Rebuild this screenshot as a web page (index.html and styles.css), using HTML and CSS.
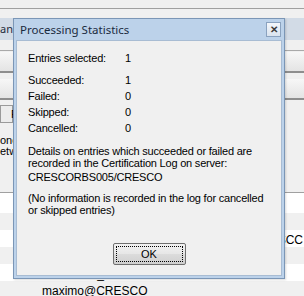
FILE: index.html
```html
<!DOCTYPE html>
<html lang="en">
<head>
    <meta charset="UTF-8">
    <meta name="viewport" content="width=device-width, initial-scale=1.0">
    <title>Processing Statistics</title>
    <link rel="stylesheet" href="styles.css">
</head>
<body>
    <div class="app">
        <div class="menubar"></div>
        <div class="tabstrip"></div>
        <div class="caption">an</div>
        <div class="toolbar"></div>

        <div class="panel">
            <div class="side left">
                <div class="btn"></div>
                <div class="btn second"></div>
                <div class="btn small"><span>Find</span></div>
                <div class="label first">once</div>
                <div class="label">etwork</div>
            </div>
            <div class="side right">
                <div class="btn"></div>
                <div class="btn second"></div>
            </div>
        </div>

        <div class="list">
            <div class="row"></div>
            <div class="row alt"></div>
            <div class="row"><span class="cell-right">SCC</span></div>
            <div class="row alt"></div>
            <div class="row"><span class="cell">maxadmin_CRESCO</span></div>
            <div class="row alt"><span class="cell">maximo@CRESCO</span></div>
        </div>
    </div>

    <div class="dialog">
        <div class="titlebar">
            <span class="title">Processing Statistics</span>
            <span class="close">&#x2715;</span>
        </div>
        <div class="body">
            <div class="stat first">
                <span class="key">Entries selected:</span><span>1</span>
            </div>
            <div class="stats">
                <div class="stat"><span class="key">Succeeded:</span><span>1</span></div>
                <div class="stat"><span class="key">Failed:</span><span>0</span></div>
                <div class="stat"><span class="key">Skipped:</span><span>0</span></div>
                <div class="stat"><span class="key">Cancelled:</span><span>0</span></div>
            </div>
            <p class="note">Details on entries which succeeded or failed are recorded in the Certification Log on server:</p>
            <p class="server">CRESCORBS005/CRESCO</p>
            <p class="note later">(No information is recorded in the log for cancelled or skipped entries)</p>
            <div class="actions">
                <button class="ok"><span>OK</span></button>
            </div>
        </div>
    </div>
</body>
</html>
```

FILE: styles.css
```css
body {
    margin: 0;
    width: 304px;
    height: 296px;
    overflow: hidden;
    background: #f0f0f0;
    font-family: 'Liberation Sans', Arial, sans-serif;
    font-size: 11px;
    color: #000;
}

.app {
    height: 296px;
}

.menubar {
    height: 8px;
    border-bottom: 1px solid #a0a0a0;
}

.tabstrip {
    height: 9px;
}

.caption {
    height: 22px;
    line-height: 22px;
    background: #d2dbe6;
    font-family: 'Noto Sans', sans-serif;
    font-size: 11px;
    color: #1e2b3c;
}

.toolbar {
    height: 10px;
    border-bottom: 1px solid #a9a9a9;
}

.panel {
    height: 141px;
    display: flex;
    justify-content: space-between;
    background: #f0f0f0;
}

.side {
    display: flex;
    flex-direction: column;
    padding-top: 1px;
    overflow: hidden;
    white-space: nowrap;
}

.side.left {
    width: 13px;
}

.side.right {
    width: 19px;
}

.btn {
    height: 19px;
    flex: none;
    background: linear-gradient(#f7f7f7, #e4e4e4);
    border-bottom: 2px solid #8e8e8e;
}

.btn.second {
    margin-top: 6px;
}

.btn.small {
    height: 16px;
    margin-top: 5px;
    line-height: 16px;
    padding-left: 10px;
    background: #ececec;
    border: 1px solid #9a9a9a;
}

.label {
    line-height: 11px;
}

.label.first {
    margin-top: 12px;
}

.list {
    border-top: 1px solid #a0a0a0;
    background: #fff;
    padding-top: 3px;
}

.row {
    height: 17px;
    box-sizing: border-box;
    padding-top: 4px;
    line-height: 13px;
    white-space: nowrap;
}

.row.alt {
    background: #f0f0f0;
}

.cell {
    padding-left: 42px;
    font-size: 12px;
}

.cell-right {
    display: block;
    text-align: right;
    padding-right: 1px;
    font-size: 12px;
}

/* dialog floats over the app */
.dialog {
    position: absolute;
    left: 13px;
    top: 18px;
    width: 272px;
    height: 261px;
    box-sizing: border-box;
    border: 1px solid #7b96b6;
    background: #bcd2ea;
    padding: 0 2px 2px 2px;
    display: flex;
    flex-direction: column;
    box-shadow: 1px 1px 2px rgba(0, 0, 0, 0.15);
}

.titlebar {
    height: 21px;
    display: flex;
    align-items: center;
    justify-content: space-between;
    padding-left: 4px;
}

.title {
    font-family: 'Noto Sans', sans-serif;
    font-size: 11.5px;
    color: #1a2a3e;
}

.close {
    width: 13px;
    height: 13px;
    margin-right: 1px;
    border: 1px solid #8aa2bf;
    background: linear-gradient(#f4f7fb, #d9e3ef);
    color: #3b3b3b;
    font-size: 10px;
    font-weight: bold;
    line-height: 13px;
    text-align: center;
}

.body {
    flex: 1;
    background: #f0f0f0;
    border: 1px solid #a8bcd3;
    padding: 9px 0 0 11px;
    letter-spacing: -0.2px;
}

.stat {
    display: flex;
    line-height: 16px;
}

.stat .key {
    width: 97px;
}

.stats {
    margin-top: 6px;
}

.note {
    margin: 10px 0 0 0;
    line-height: 11.5px;
    width: 240px;
}

.server {
    margin: 2px 0 0 0;
    line-height: 12px;
}

.note.later {
    margin-top: 10px;
}

.actions {
    margin-top: 27px;
    padding-right: 11px;
    display: flex;
    justify-content: center;
}

.ok {
    width: 73px;
    height: 22px;
    padding: 2px;
    border: 1px solid #707070;
    border-radius: 2px;
    background: linear-gradient(#f2f2f2, #e6e6e6 50%, #dcdcdc 50%, #cfcfcf);
    font-family: 'Liberation Sans', Arial, sans-serif;
    font-size: 11px;
    letter-spacing: 0;
    color: #000;
}

.ok span {
    display: block;
    height: 100%;
    box-sizing: border-box;
    border: 1px dotted #000;
    line-height: 14px;
}
```
